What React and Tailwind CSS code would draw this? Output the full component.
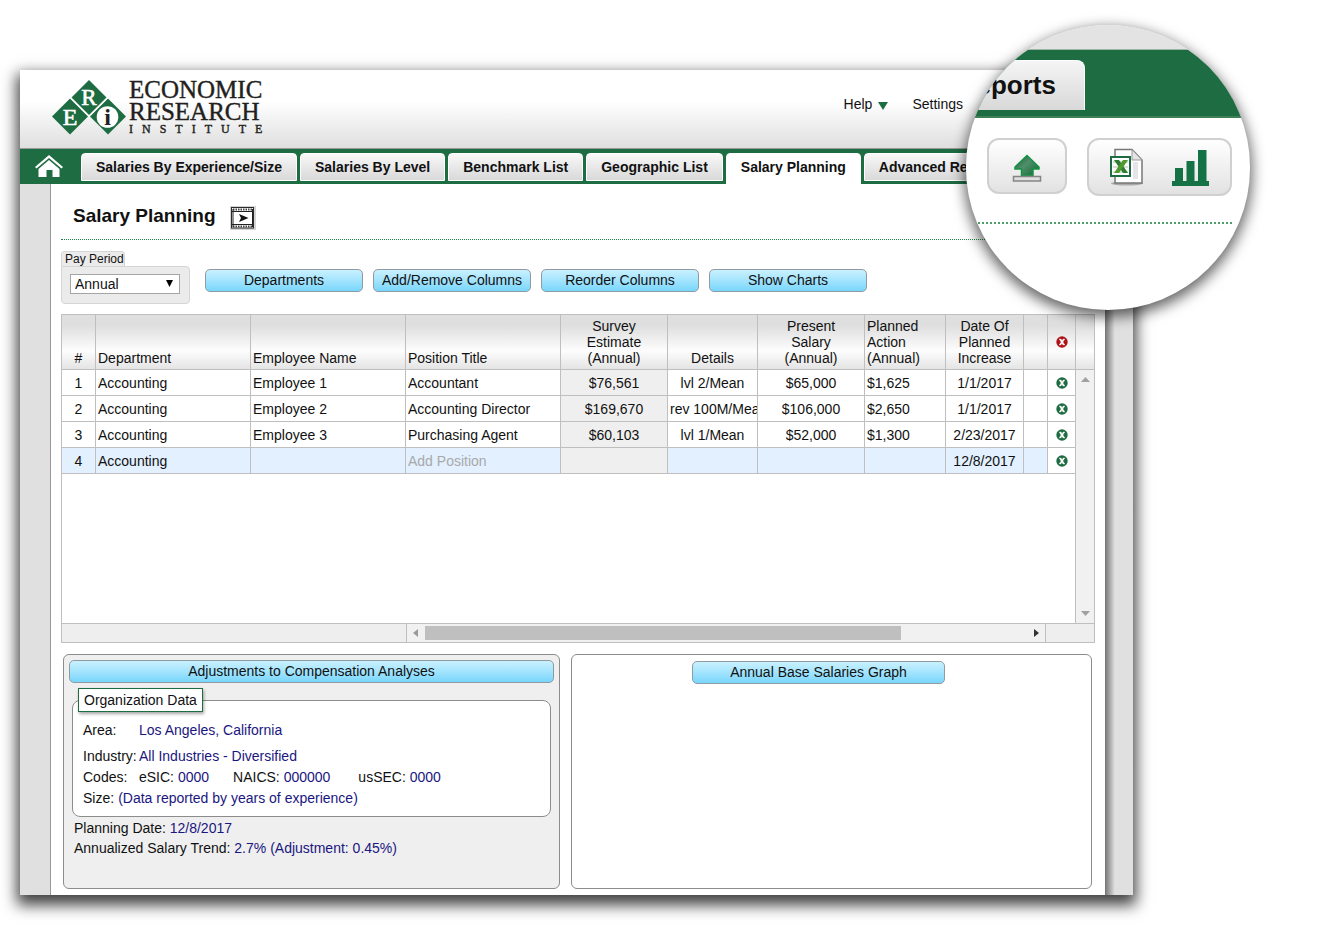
import React, { useState } from 'react';

const tabs = [
  'Salaries By Experience/Size',
  'Salaries By Level',
  'Benchmark List',
  'Geographic List',
  'Salary Planning',
  'Advanced Reports',
];

const employees = [
  { department: 'Accounting', name: 'Employee 1', title: 'Accountant', estimate: '$76,561', details: 'lvl 2/Mean', salary: '$65,000', action: '$1,625', date: '1/1/2017' },
  { department: 'Accounting', name: 'Employee 2', title: 'Accounting Director', estimate: '$169,670', details: 'rev 100M/Mean', salary: '$106,000', action: '$2,650', date: '1/1/2017' },
  { department: 'Accounting', name: 'Employee 3', title: 'Purchasing Agent', estimate: '$60,103', details: 'lvl 1/Mean', salary: '$52,000', action: '$1,300', date: '2/23/2017' },
  { department: 'Accounting', name: '', title: '', estimate: '', details: '', salary: '', action: '', date: '12/8/2017', isNew: true },
];

const Logo = () => (
  <a href="#home" aria-label="Economic Research Institute">
    <svg width="230" height="60" viewBox="0 0 230 60">
      <g fill="#1e6c42">
        <path d="M37 0 55 18 37 36 19 18Z" />
        <path d="M18 18.500 36 36.500 18 54.500 0 36.500Z" />
        <path d="M56 18.500 74 36.500 56 54.500 38 36.500Z" />
      </g>
      <path d="M18 17 37 36 56 17" fill="none" stroke="#fff" strokeWidth="1.500" />
      <circle cx="55.500" cy="37" r="10.800" fill="#fff" />
      <g fontFamily="Liberation Serif, serif" textAnchor="middle" strokeWidth=".6">
        <text x="37" y="25" fontSize="23" fill="#fff" stroke="#fff">R</text>
        <text x="18" y="45" fontSize="24" fill="#fff" stroke="#fff">E</text>
        <text x="55.500" y="45" fontSize="24" fontWeight="bold" fill="#231f20">i</text>
      </g>
      <g fontFamily="Liberation Serif, serif" fill="#231f20" stroke="#231f20" strokeWidth=".4">
        <text x="77" y="18" fontSize="25">ECONOMIC</text>
        <text x="77" y="40" fontSize="25">RESEARCH</text>
        <text x="77" y="53" fontSize="12" className="tracking-[9px]">INSTITUTE</text>
      </g>
    </svg>
  </a>
);

const HomeIcon = () => (
  <svg width="30" height="23" viewBox="0 0 30 23" fill="#fff">
    <path d="M15 0 29 12 27.500 13.500 15 3 2.500 13.500 1 12Z" />
    <path d="M15 5 25.500 14V22H18.500V15H12.500V22H4.500V14Z" />
  </svg>
);

const FilmIcon = () => (
  <svg width="26" height="24" viewBox="0 0 26 24">
    <rect width="26" height="24" fill="#d4d4d4" />
    <rect x="1.500" y="1.500" width="22" height="20.500" fill="#fff" stroke="#2b2b2b" />
    <path d="M2 5.500H23M2 18.500H23" stroke="#222" strokeWidth="1.200" />
    <path d="M3 3.500H23M3 20.500H23" stroke="#444" strokeWidth="2" strokeDasharray="1.500 1" />
    <path d="M3 3V21M22.500 3V21" stroke="#222" />
    <path d="M9 8 18.500 12 9 16 11 12Z" fill="#111" />
  </svg>
);

const DeleteIcon = ({ color }) => (
  <svg width="12" height="12" viewBox="0 0 12 12">
    <circle cx="6" cy="6" r="5.700" fill={color} />
    <path d="M3.200 3H5L8.800 9H7ZM7.200 3H8.800L4.800 9H3.200Z" fill="#fff" stroke="#fff" strokeWidth=".4" />
  </svg>
);

const UploadIcon = () => (
  <svg width="30" height="28" viewBox="0 0 30 28">
    <defs>
      <linearGradient id="arrow" x1="0" y1="0" x2="1" y2="1">
        <stop offset="0" stopColor="#1d5c38" />
        <stop offset=".45" stopColor="#4f8f6c" />
        <stop offset="1" stopColor="#0a6a30" />
      </linearGradient>
    </defs>
    <path d="M15 1.500 27 13V15H21V21.500H9.500V15H3V13Z" fill="url(#arrow)" stroke="#169143" strokeWidth="1.500" />
    <rect x="1.500" y="22.500" width="27" height="4.500" fill="#dedede" stroke="#858585" strokeWidth="1.500" />
  </svg>
);

const ExcelIcon = () => (
  <svg width="34" height="38" viewBox="0 0 34 38">
    <ellipse cx="17" cy="35.500" rx="16" ry="2" fill="#aaa" />
    <path d="M5 1.500H22L32 12V35H5Z" fill="#fff" stroke="#777" strokeWidth="1.500" />
    <path d="M22 1.500V12H32Z" fill="#e4e4e4" stroke="#999" />
    <path d="M23 14V31H28V14Z" fill="#e6e6ea" />
    <rect x="1" y="9" width="19" height="19" fill="#fff" stroke="#1e6c42" strokeWidth="2" />
    <path d="M3 14H18M3 19H18M3 24H18" stroke="#a8c8a0" />
    <path d="M4 12H9L18 25H13Z" fill="#2f7d32" />
    <path d="M13 12H18L9 25H4Z" fill="#4f9a2e" />
  </svg>
);

const ChartIcon = () => (
  <svg width="37" height="37" viewBox="0 0 37 37" fill="#157244">
    <path d="M0 32H37V37H0ZM3 19H11V33H3ZM14.500 12H22.500V33H14.500ZM26 1H34.500V33H26Z" />
  </svg>
);

const BlueButton = ({ children, className = '' }) => (
  <button
    type="button"
    className={`h-[23px] rounded-[5px] border border-[#8f9ba0] bg-linear-to-b from-[#c9f1ff] to-[#78d6fc] pb-[2px] text-sm leading-[18px] ${className}`}
  >
    {children}
  </button>
);

const Magnifier = () => (
  <div className="absolute -top-[45px] -right-[117px] h-[285px] w-[284px] overflow-hidden rounded-full bg-white shadow-[0_5px_14px_2px_rgba(0,0,0,0.6)]">
    <div className="h-[25px] border-b border-[#9fb5a8] bg-[#e3e3e3]" />
    <div className="h-[68px] border-b-2 border-[#3f8059] bg-[#1e6c42] pt-[10px]">
      <div className="flex h-[50px] w-[119px] items-center justify-end rounded-tr-lg border-t border-r border-white bg-linear-to-b from-[#f5f5f5] to-[#d8d8d8] pr-7 text-[26px] font-bold">
        Reports
      </div>
    </div>
    <div className="mr-[18px] flex gap-5 border-b-2 border-dotted border-[#4aa067] pt-5 pb-[26px] pl-[21px]">
      <button type="button" aria-label="Upload" className="flex h-14 w-20 items-center justify-center rounded-xl border-2 border-[#d0d0d0] bg-linear-to-b from-white to-[#e2e2e2] pt-1">
        <UploadIcon />
      </button>
      <div className="flex h-[58px] w-[145px] items-center justify-center gap-7 rounded-xl border-2 border-[#d0d0d0] bg-linear-to-b from-white to-[#e2e2e2]">
        <button type="button" aria-label="Export to Excel"><ExcelIcon /></button>
        <button type="button" aria-label="Charts"><ChartIcon /></button>
      </div>
    </div>
  </div>
);

const EmployeeTable = () => (
  <div className="mt-[10px]">
    <table className="w-full table-fixed border-collapse text-sm leading-4 [&_td]:border [&_td]:border-[#bfbfbf] [&_th]:border [&_th]:border-[#bfbfbf] [&_th]:font-normal">
      <colgroup>
        <col className="w-[34px]" />
        <col className="w-[155px]" />
        <col className="w-[155px]" />
        <col />
        <col className="w-[107px]" />
        <col className="w-[90px]" />
        <col className="w-[107px]" />
        <col className="w-[81px]" />
        <col className="w-[78px]" />
        <col className="w-6" />
        <col className="w-7" />
        <col className="w-[19px]" />
      </colgroup>
      <thead>
        <tr className="h-[55px] bg-linear-to-b from-[#dfdfdf] from-20% via-[#fdfdfd] via-65% to-[#e3e3e3] align-bottom">
          <th className="pb-[3px]">#</th>
          <th className="px-[2px] pb-[3px] text-left">Department</th>
          <th className="px-[2px] pb-[3px] text-left">Employee Name</th>
          <th className="px-[2px] pb-[3px] text-left">Position Title</th>
          <th className="px-5 pb-[3px]">Survey Estimate (Annual)</th>
          <th className="pb-[3px]">Details</th>
          <th className="px-5 pb-[3px]">Present Salary (Annual)</th>
          <th className="px-[2px] pb-[3px] text-left">Planned Action (Annual)</th>
          <th className="px-2 pb-[3px]">Date Of Planned Increase</th>
          <th />
          <th className="align-middle">
            <button type="button" aria-label="Delete all" className="mx-auto block">
              <DeleteIcon color="#b01116" />
            </button>
          </th>
          <th />
        </tr>
      </thead>
      <tbody>
        {employees.map((item, i) => (
          <tr key={i} className={`h-[26px] text-center ${item.isNew ? 'bg-[#e2f0ff]' : 'bg-white'}`}>
            <td>{i + 1}</td>
            <td className="px-[2px] text-left">{item.department}</td>
            <td className="px-[2px] text-left">{item.name}</td>
            <td className="px-[2px] text-left">
              {item.isNew ? (
                <input aria-label="Add Position" placeholder="Add Position" className="block h-4 w-full outline-none placeholder:text-[#a9a9a9]" />
              ) : (
                item.title
              )}
            </td>
            <td className="bg-[#efefef]">{item.estimate}</td>
            <td className="overflow-hidden px-[2px] whitespace-nowrap">{item.details}</td>
            <td>{item.salary}</td>
            <td className="px-[2px] text-left">{item.action}</td>
            <td>{item.date}</td>
            <td />
            <td className="bg-white">
              <button type="button" aria-label={`Delete row ${i + 1}`} className="mx-auto block">
                <DeleteIcon color="#1e6c42" />
              </button>
            </td>
            {i === 0 && (
              <td rowSpan={employees.length + 1} className="h-px bg-[#f1f1f1] p-0">
                <div className="flex h-full min-h-[252px] flex-col items-center justify-between py-[7px]">
                  <svg width="9" height="5" viewBox="0 0 9 5" fill="#a0a0a0"><path d="M0 5 4.500 0 9 5Z" /></svg>
                  <svg width="9" height="5" viewBox="0 0 9 5" fill="#a0a0a0"><path d="M0 0H9L4.500 5Z" /></svg>
                </div>
              </td>
            )}
          </tr>
        ))}
        <tr className="h-[150px]">
          <td colSpan={11} />
        </tr>
      </tbody>
    </table>
    {/* horizontal scrollbar */}
    <div className="flex h-[19px] border border-t-0 border-[#bfbfbf] bg-[#eee]">
      <div className="w-[345px] border-r border-[#bfbfbf]" />
      <div className="flex flex-1 items-center bg-[#f1f1f1] px-[6px]">
        <svg width="5" height="8" viewBox="0 0 5 8" fill="#999"><path d="M5 0V8L0 4Z" /></svg>
        <div className="mx-[7px] h-[14px] flex-1">
          <div className="h-full w-[79%] bg-[#bfbfbf]" />
        </div>
        <svg width="5" height="8" viewBox="0 0 5 8" fill="#333"><path d="M0 0V8L5 4Z" /></svg>
      </div>
      <div className="w-[49px] border-l border-[#bfbfbf]" />
    </div>
  </div>
);

const OrganizationPanel = () => (
  <section className="h-[235px] w-[497px] rounded-md border border-[#8c8c8c] bg-[#efefef] p-[5px] text-sm leading-5">
    <BlueButton className="block w-full">Adjustments to Compensation Analyses</BlueButton>
    <fieldset className="mx-[3px] mt-[5px] rounded-lg border border-[#8c8c8c] bg-white px-[5px] pb-2">
      <legend className="border border-[#1e6c42] bg-white px-[5px] leading-[22px] shadow-[1px_2px_3px_rgba(0,0,0,0.35)]">Organization Data</legend>
      <dl className="px-[5px] pt-2 text-[#1a1680] [&_dt]:text-[#111]">
        <div className="flex pb-[6px]"><dt className="w-14">Area:</dt><dd>Los Angeles, California</dd></div>
        <div className="flex"><dt className="w-14">Industry:</dt><dd>All Industries - Diversified</dd></div>
        <div className="flex items-center leading-[22px]">
          <dt className="w-14">Codes:</dt>
          <dd className="flex gap-6">
            <span><span className="text-[#111]">eSIC:</span> 0000</span>
            <span><span className="text-[#111]">NAICS:</span> 000000</span>
            <span className="pl-1"><span className="text-[#111]">usSEC:</span> 0000</span>
          </dd>
        </div>
        <div className="flex gap-1"><dt>Size:</dt><dd>(Data reported by years of experience)</dd></div>
      </dl>
    </fieldset>
    <div className="px-[5px] pt-[1px] text-[#1a1680]">
      <p><span className="text-[#111]">Planning Date:</span> 12/8/2017</p>
      <p><span className="text-[#111]">Annualized Salary Trend:</span> 2.7% (Adjustment: 0.45%)</p>
    </div>
  </section>
);

const App = () => {
  const [payPeriod, setPayPeriod] = useState('Annual');

  return (
    <div className="overflow-hidden bg-white pt-[70px] pr-[187px] pb-9 pl-5 font-['Liberation_Sans',Arial,sans-serif] text-sm text-[#111]">
      <div className="relative bg-[#e0e0e0] shadow-[0_7px_14px_3px_rgba(0,0,0,0.75)]">
        <header className="flex h-[79px] items-start justify-between border-b border-[#9a9a9a] bg-linear-to-b from-white from-40% to-[#dfdfdf] pt-[10px] pr-[170px] pl-8">
          <Logo />
          <div className="flex gap-6 pt-[14px]">
            <a href="#help" className="flex items-center gap-[6px]">
              Help
              <svg width="10" height="8" viewBox="0 0 10 8" fill="#1e6c42" className="mt-1"><path d="M0 0H10L5 8Z" /></svg>
            </a>
            <a href="#settings">Settings</a>
          </div>
        </header>

        <nav className="flex h-[35px] gap-[3px] overflow-hidden bg-[#1e6c42] pt-1">
          <a href="#home" aria-label="Home" className="flex w-[58px] shrink-0 justify-center pt-[2px]">
            <HomeIcon />
          </a>
          {tabs.map((tab) => (
            <a
              key={tab}
              href="#tab"
              className={`shrink-0 rounded-t border border-white px-[14px] text-sm leading-[26px] font-bold whitespace-nowrap ${
                tab === 'Salary Planning' ? 'h-8 bg-white' : 'h-7 bg-linear-to-b from-[#f8f8f8] to-[#d9d9d9]'
              }`}
            >
              {tab}
            </a>
          ))}
        </nav>

        <div className="flex">
          <main className="ml-[30px] min-w-0 flex-1 border-l border-[#999] bg-white px-[10px] pb-[6px]">
            <div className="flex h-14 items-center gap-[14px] border-b border-dotted border-[#1f8a45] pt-2 pl-3">
              <h1 className="text-[19px] leading-6 font-bold">Salary Planning</h1>
              <button type="button" aria-label="Watch video" className="pt-1"><FilmIcon /></button>
            </div>

            <div className="mt-[11px] flex items-start">
              <div className="w-[129px]">
                <label htmlFor="period" className="block w-16 rounded-t border border-b-0 border-[#d5d5d5] bg-[#ebebeb] pl-[3px] text-xs leading-[14px]">
                  Pay Period
                </label>
                <div className="relative h-[38px] rounded-b rounded-tr border border-[#d5d5d5] bg-[#ebebeb] px-2 pt-[7px]">
                  <select
                    id="period"
                    value={payPeriod}
                    onChange={(e) => setPayPeriod(e.target.value)}
                    className="h-5 w-[110px] appearance-none border border-[#a5a5a5] bg-white pl-1 text-sm leading-[18px]"
                  >
                    <option>Annual</option>
                    <option>Monthly</option>
                    <option>Hourly</option>
                  </select>
                  <svg width="7" height="7" viewBox="0 0 7 7" className="pointer-events-none absolute top-[13px] right-4"><path d="M0 0H7L3.500 7Z" /></svg>
                </div>
              </div>
              <div className="mt-[18px] ml-[15px] flex gap-[10px]">
                <BlueButton className="w-[158px]">Departments</BlueButton>
                <BlueButton className="w-[158px]">Add/Remove Columns</BlueButton>
                <BlueButton className="w-[158px]">Reorder Columns</BlueButton>
                <BlueButton className="w-[158px]">Show Charts</BlueButton>
              </div>
            </div>

            <EmployeeTable />

            <div className="mt-[11px] flex gap-[11px] pr-[3px] pl-[2px]">
              <OrganizationPanel />
              <section className="flex-1 rounded-md border border-[#8c8c8c] bg-white pt-[6px] pr-[26px] text-center">
                <BlueButton className="w-[253px]">Annual Base Salaries Graph</BlueButton>
              </section>
            </div>
          </main>
          <div className="w-7 bg-linear-to-r from-[#757575] to-[#e0e0e0] to-35%" />
        </div>

        <Magnifier />
      </div>
    </div>
  );
};

export default App;
